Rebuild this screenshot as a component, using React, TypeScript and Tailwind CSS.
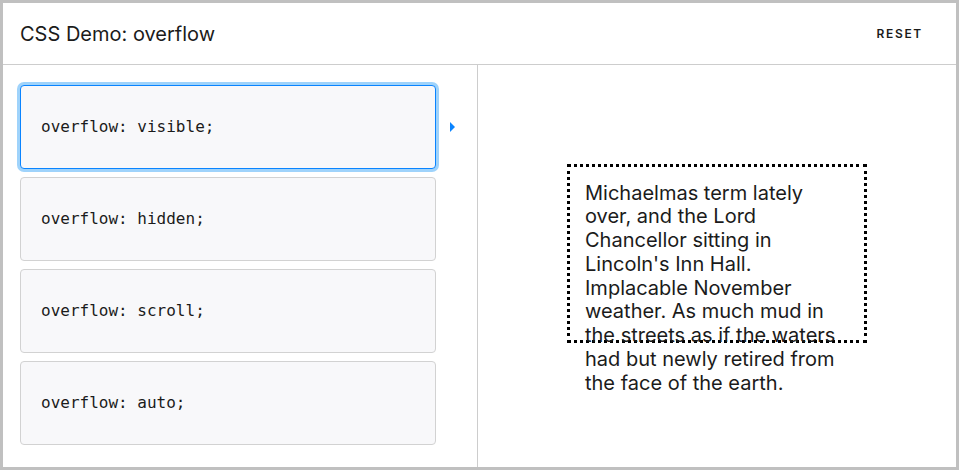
const choices = ["overflow: visible;", "overflow: hidden;", "overflow: scroll;", "overflow: auto;"];

export default function App() {
  return (
    <div
      className="h-[470px] w-[959px] border-[3px] border-[#c0c0c0] bg-white text-[#1b1b1b] flex flex-col"
      style={{ fontFamily: "Inter, 'Noto Sans', sans-serif" }}
    >
      <header className="flex h-[62px] shrink-0 items-center justify-between border-b border-[#cdcdcd] pl-[17px] pr-[33px]">
        <h1 className="text-[20px] font-normal">CSS Demo: overflow</h1>
        <button className="text-[12px] font-semibold tracking-[1.7px]">RESET</button>
      </header>

      <div className="flex min-h-0 flex-1">
        <section className="flex w-[475px] shrink-0 flex-col gap-2 border-r border-[#cdcdcd] pl-[17px] pt-[20px]">
          {choices.map((c, i) => (
            <div key={c} className="relative flex items-center">
              <div
                className={
                  "flex h-[84px] w-[416px] items-center rounded-[4px] border bg-[#f8f8fa] px-[20px] text-[16px] " +
                  (i === 0
                    ? "border-[#0a84ff] ring-[3px] ring-[#9fd3fb]"
                    : "border-[#d2d2d2]")
                }
                style={{ fontFamily: "'DejaVu Sans Mono', monospace" }}
              >
                {c}
              </div>
              {i === 0 && (
                <svg className="ml-[14px]" width="5" height="10" viewBox="0 0 5 10">
                  <path d="M0 0 L5 5 L0 10 Z" fill="#0a84ff" />
                </svg>
              )}
            </div>
          ))}
        </section>

        <section className="flex flex-1 items-center justify-center pb-[26px]">
          <div className="h-[179px] w-[300px] border-[3px] border-dotted border-black pl-[15px] pt-[15px]">
            <p className="w-[262px] text-[20px] leading-[23.8px]">
              Michaelmas term lately over, and the Lord Chancellor sitting in Lincoln's Inn Hall. Implacable November
              weather. As much mud in the streets as if the waters had but newly retired from the face of the earth.
            </p>
          </div>
        </section>
      </div>
    </div>
  );
}
